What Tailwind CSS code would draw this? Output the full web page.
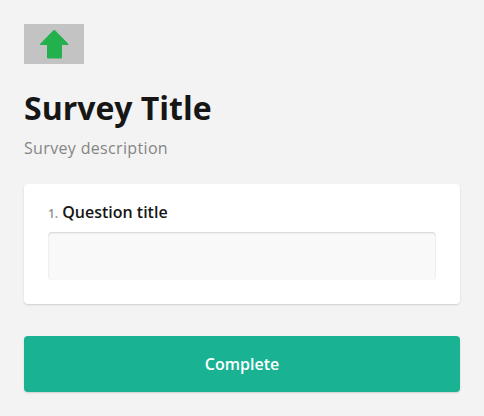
<!DOCTYPE html>
<html lang="en">
<head>
<meta charset="utf-8">
<title>Survey Title</title>
<script src="https://cdn.jsdelivr.net/npm/@tailwindcss/browser@4"></script>
</head>
<body class="min-h-screen bg-[#f3f3f3] p-6 font-['Open_Sans',sans-serif] text-base text-[#161616]">
<header>
  <svg class="block h-10 w-15 bg-[#c3c3c3]" viewBox="0 0 60 40" role="img" aria-label="Logo">
    <path fill="#22b14c" stroke="#22b14c" stroke-width="1" stroke-linejoin="round" d="M30.3 6 L44 20 V20.5 H37.5 V34 H23.5 V20.5 H16.5 V20 Z"/>
  </svg>
  <h1 class="mt-6 text-[32px] leading-10 font-bold">Survey Title</h1>
  <p class="mt-2 leading-6 tracking-[0.34px] text-[#858585]">Survey description</p>
</header>
<main class="mt-6">
  <section class="h-30 rounded bg-white px-6 pt-4 shadow-[0_1px_2px_rgba(0,0,0,0.15)]">
    <label for="q1" class="flex h-6 items-baseline leading-6 font-semibold"><span class="mr-1 text-xs leading-6 font-semibold text-[#909090]">1.</span>Question title</label>
    <input id="q1" class="mt-2 block h-12 w-full rounded bg-[#f9f9f9] px-4 shadow-[inset_0_1px_2px_rgba(0,0,0,0.15)] outline-none">
  </section>
  <button class="mt-8 h-14 w-full rounded bg-[#19b394] font-semibold text-white shadow-[0_1px_2px_rgba(0,0,0,0.15)]">Complete</button>
</main>
</body>
</html>
